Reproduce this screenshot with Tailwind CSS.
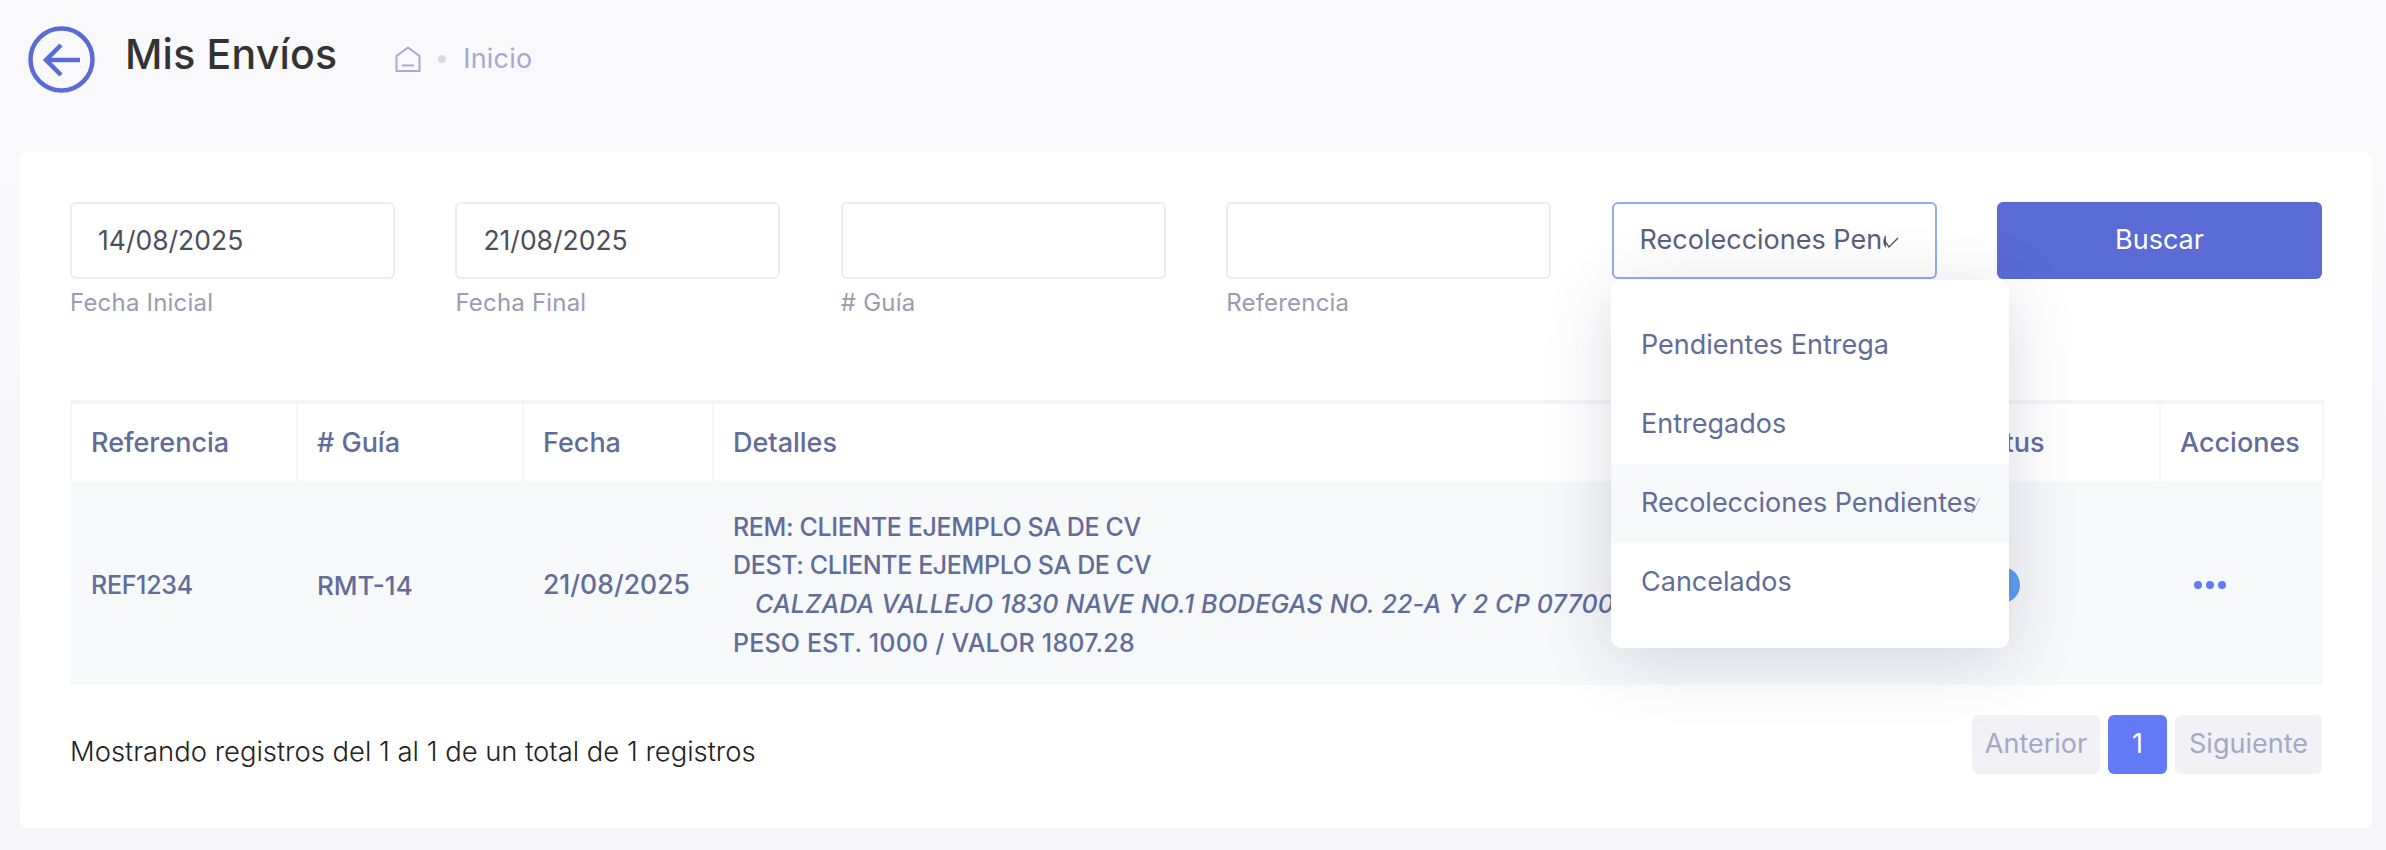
<!DOCTYPE html>
<html lang="es">
<head>
    <meta charset="UTF-8">
    <title>Mis Envíos</title>
    <script src="https://cdn.jsdelivr.net/npm/@tailwindcss/browser@4"></script>
</head>
<body class="bg-linear-to-b from-[#f9f9fc] to-[#f6f6fa] font-['Inter',sans-serif] overflow-hidden h-[850px]">
    <!-- encabezado -->
    <header class="h-[152px] pl-[28px] pt-[26px] flex items-start">
        <svg class="w-[67px] h-[67px] shrink-0" viewBox="0 0 67 67" fill="none" stroke="#5a6bd8" stroke-width="4.5">
            <circle cx="33.5" cy="33.5" r="31"/>
            <path d="M52 34H18M33 19L18 34L33 49"/>
        </svg>
        <h1 class="ml-[30px] mt-[6px] text-[41px] leading-[44px] font-medium text-[#333333] tracking-[0.2px]">Mis Envíos</h1>
        <div class="ml-[58px] mt-[19px] flex items-center">
            <svg class="w-[26px] h-[26px]" viewBox="0 0 26 26" fill="none" stroke="#aaa9cd" stroke-width="2">
                <path d="M1.500 25V10L13 1.500L24.500 10V25Z"/>
                <path d="M7 19.500H19"/>
            </svg>
            <span class="ml-[17px] w-[8px] h-[8px] rounded-full bg-[#d9d8e8]"></span>
            <span class="ml-[17px] text-[27px] leading-[28px] text-[#a9a8cc] tracking-[0.2px]">Inicio</span>
        </div>
    </header>

    <main class="relative ml-[20px] w-[2352px] h-[676px] bg-white rounded-[8px] px-[50px] pt-[50px]">
        <!-- filtros -->
        <div class="grid grid-cols-6 gap-x-[60.4px] h-[198px]">
            <div>
                <div class="h-[77px] border-2 border-[#ecedf3] rounded-[6px] pl-[26px] flex items-center text-[26.500px] text-[#4b4f5b]">14/08/2025</div>
                <p class="mt-[9px] text-[24px] leading-[30px] text-[#9a9bb0] tracking-[0.2px]">Fecha Inicial</p>
            </div>
            <div>
                <div class="h-[77px] border-2 border-[#ecedf3] rounded-[6px] pl-[26px] flex items-center text-[26.500px] text-[#4b4f5b]">21/08/2025</div>
                <p class="mt-[9px] text-[24px] leading-[30px] text-[#9a9bb0] tracking-[0.2px]">Fecha Final</p>
            </div>
            <div>
                <div class="h-[77px] border-2 border-[#ecedf3] rounded-[6px]"></div>
                <p class="mt-[9px] text-[24px] leading-[30px] text-[#9a9bb0] tracking-[0.2px]"># Guía</p>
            </div>
            <div>
                <div class="h-[77px] border-2 border-[#ecedf3] rounded-[6px]"></div>
                <p class="mt-[9px] text-[24px] leading-[30px] text-[#9a9bb0] tracking-[0.2px]">Referencia</p>
            </div>
            <div class="relative">
                <div class="h-[77px] border-2 border-[#98a8f8] rounded-[6px] pl-[26px] flex items-center text-[27px] text-[#5b5f7c]">
                    <span class="w-[246px] overflow-hidden whitespace-nowrap">Recolecciones Pendientes</span>
                    <svg class="w-[16px] h-[12px] ml-[-3px] mt-[4px]" viewBox="0 0 16 12" fill="none" stroke="#4b4f5b" stroke-width="1.300"><path d="M1 3L6 10L15 1"/></svg>
                </div>
            </div>
            <div>
                <button class="w-full h-[77px] bg-[#5a6bd6] rounded-[6px] text-white text-[27px]">Buscar</button>
            </div>
        </div>

        <!-- tabla -->
        <table class="w-[2252px] table-fixed border-collapse text-[#626c99] text-[25px]">
            <colgroup>
                <col class="w-[226px]"><col class="w-[226px]"><col class="w-[190px]"><col class="w-[1228px]"><col class="w-[219px]"><col class="w-[163px]">
            </colgroup>
            <thead class="border-t-4 border-[#f4f4f8] text-[27px]">
                <tr class="h-[79px] text-left">
                    <th class="font-medium pl-[19px] pt-[2px] border-x-2 border-[#f6f6fa]">Referencia</th>
                    <th class="font-medium pl-[19px] pt-[2px] border-r-2 border-[#f6f6fa]"># Guía</th>
                    <th class="font-medium pl-[19px] pt-[2px] border-r-2 border-[#f6f6fa]">Fecha</th>
                    <th class="font-medium pl-[19px] pt-[2px] border-r-2 border-[#f6f6fa]">Detalles</th>
                    <th class="font-medium pl-[7px] pt-[2px] border-r-2 border-[#f6f6fa]">Estatus</th>
                    <th class="font-medium pl-[19px] pt-[2px] border-r-2 border-[#f6f6fa]">Acciones</th>
                </tr>
            </thead>
            <tbody>
                <tr class="h-[204px] bg-[#f7f8fa] font-medium">
                    <td class="pl-[20px] pt-[6px] tracking-[-0.3px]">REF1234</td>
                    <td class="pl-[20px] pt-[4px] text-[26px]">RMT-14</td>
                    <td class="pl-[20px] pt-[4px] text-[26.500px]">21/08/2025</td>
                    <td class="pl-[20px] pt-[4px] leading-[38.7px] whitespace-nowrap">
                        <div class="tracking-[-0.37px]">REM: CLIENTE EJEMPLO SA DE CV</div>
                        <div class="tracking-[-0.37px]">DEST: CLIENTE EJEMPLO SA DE CV</div>
                        <div class="pl-[22px] italic tracking-[0.18px]">CALZADA VALLEJO 1830 NAVE NO.1 BODEGAS NO. 22-A Y 2 CP 07700</div>
                        <div class="tracking-[0.2px]">PESO EST. 1000 / VALOR 1807.28</div>
                    </td>
                    <td class="pl-[20px] pt-[4px]">
                        <div class="w-[36px] h-[36px] ml-[23px] rounded-full bg-[#5b9ff0]"></div>
                    </td>
                    <td class="pl-[34px] pt-[4px]">
                        <div class="flex gap-[4px]">
                            <span class="w-[8px] h-[8px] rounded-full bg-[#627af6]"></span>
                            <span class="w-[8px] h-[8px] rounded-full bg-[#627af6]"></span>
                            <span class="w-[8px] h-[8px] rounded-full bg-[#627af6]"></span>
                        </div>
                    </td>
                </tr>
            </tbody>
        </table>

        <!-- pie -->
        <div class="mt-[30px] flex items-start justify-between">
            <p class="mt-[18px] text-[27.400px] leading-[36px] font-light text-[#222222]">Mostrando registros del 1 al 1 de un total de 1 registros</p>
            <div class="flex gap-[8px] h-[59px] text-[27px]">
                <span class="w-[128px] bg-[#f1f1f6] rounded-[6px] flex items-center justify-center text-[#a5a8c6]">Anterior</span>
                <span class="w-[59px] bg-[#627af6] rounded-[6px] flex items-center justify-center text-white">1</span>
                <span class="w-[147px] bg-[#f1f1f6] rounded-[6px] flex items-center justify-center text-[#a5a8c6]">Siguiente</span>
            </div>
        </div>

        <!-- menu del select -->
        <ul class="absolute left-[1591px] top-[128px] w-[398px] h-[368px] py-[26px] bg-white rounded-[10px] shadow-[0_12px_70px_rgba(40,40,80,0.16)] text-[27px] text-[#626c99]">
            <li class="h-[79px] pl-[30px] flex items-center">Pendientes Entrega</li>
            <li class="h-[79px] pl-[30px] flex items-center">Entregados</li>
            <li class="relative h-[79px] pl-[30px] flex items-center bg-[#f7f8fa] whitespace-nowrap">
                Recolecciones Pendientes
                <svg class="absolute left-[354px] top-[33px] w-[16px] h-[17px]" viewBox="0 0 16 17" fill="none" stroke="#9ea2c4" stroke-width="1"><path d="M1 7L7 16L15 1"/></svg>
            </li>
            <li class="h-[79px] pl-[30px] flex items-center">Cancelados</li>
        </ul>
    </main>
</body>
</html>
